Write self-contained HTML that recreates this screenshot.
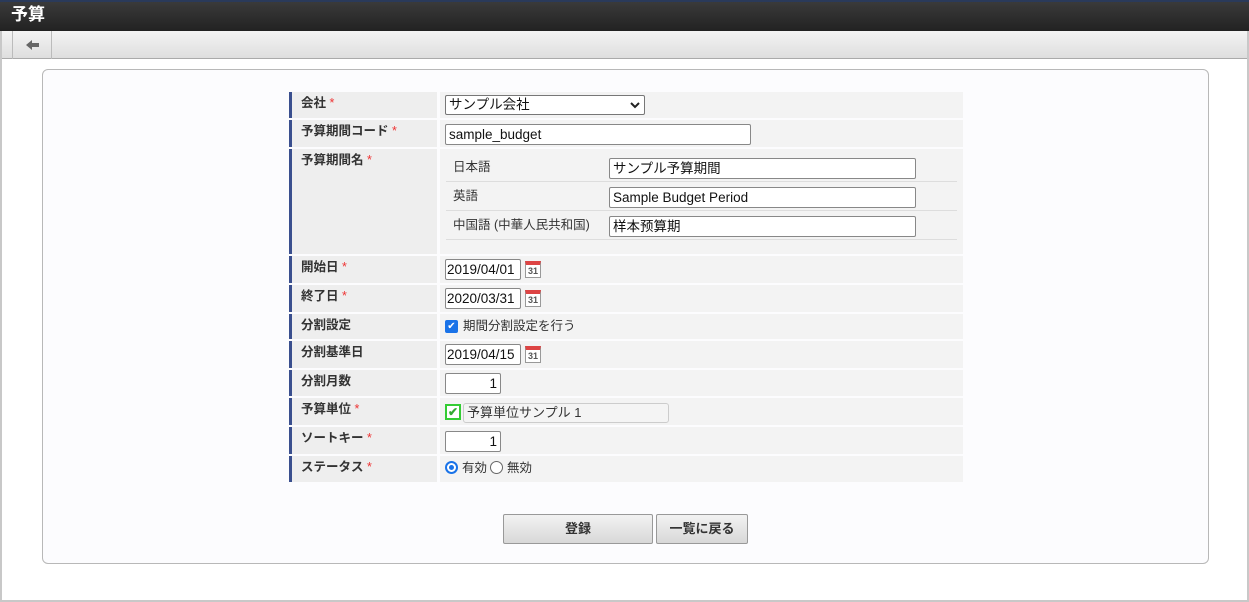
<!DOCTYPE html>
<html><head><meta charset="utf-8"><style>
*{box-sizing:border-box;margin:0;padding:0}
body{width:1249px;height:602px;overflow:hidden;background:#fff;font-family:"Liberation Sans","Noto Sans CJK JP",sans-serif;font-size:13px;color:#333;position:relative}
.frame{position:absolute;left:0;top:0;width:1249px;height:602px;border:2px solid #c8c8c8;border-top:none}
.hdr{position:absolute;left:0;top:0;width:1249px;height:31px;background:linear-gradient(#3a3a3a,#222);border-top:2px solid #2a3a5a;color:#fff;font-weight:bold;font-size:17px;line-height:20px;padding:3px 0 0 11px}
.tb{position:absolute;left:2px;top:31px;width:1245px;height:28px;background:linear-gradient(#f4f4f4,#dedede);border-bottom:1px solid #aaa}
.tb .b{position:absolute;left:10px;top:0;width:40px;height:28px;border-left:1px solid #bbb;border-right:1px solid #bbb}
.panel{position:absolute;left:42px;top:69px;width:1167px;height:495px;border:1px solid #b8b8b8;border-radius:6px;background:#fcfcfe}
.lab{position:absolute;left:289px;width:148px;background:#eee;border-left:3px solid #3a4f8e;font-weight:bold;font-size:12.5px;line-height:16px;padding:3px 0 0 9px;color:#333}
.val{position:absolute;left:440px;width:523px;background:#f3f3f3}
.r{color:#e33;font-weight:normal}
.in{position:absolute;background:#fff;border:1px solid #888;border-radius:2px;height:21px;font-size:13.5px;line-height:17px;padding:1px 3px;color:#111;white-space:nowrap}
.cal{position:absolute;width:16px;height:17px;border:1px solid #999;border-top:4px solid #d44;background:#fff;font-size:9px;text-align:center;line-height:12px;color:#555;font-weight:bold}
.sub{position:absolute;left:453px;font-size:12.5px;line-height:16px;color:#333}
.btn{position:absolute;top:514px;height:30px;border:1px solid #999;border-radius:2px;background:linear-gradient(#f2f2f2,#d8d8d8);text-align:center;line-height:28px;font-weight:bold;font-size:13px;color:#333}
</style></head><body>
<div class="frame"></div>
<div class="hdr">予算</div>
<div class="tb"><div class="b"><svg width="40" height="28" viewBox="0 0 40 28"><path d="M13 14 L19 9 L19 12 L26 12 L26 16 L19 16 L19 19 Z" fill="#666"/></svg></div></div>
<div class="panel"></div>

<div class="lab" style="top:92px;height:26px">会社 <span class="r">*</span></div><div class="val" style="top:92px;height:26px"></div>
<div class="in" style="left:445px;top:95px;width:200px;height:20px;padding:0 3px;border-color:#777">サンプル会社<svg style="position:absolute;right:4px;top:5px" width="10" height="8" viewBox="0 0 10 8"><path d="M1 2 L5 6 L9 2" stroke="#222" stroke-width="2" fill="none"/></svg></div>
<div class="lab" style="top:120px;height:27px">予算期間コード <span class="r">*</span></div><div class="val" style="top:120px;height:27px"></div>
<div class="in" style="left:445px;top:124px;width:306px">sample_budget</div>
<div class="lab" style="top:149px;height:105px">予算期間名 <span class="r">*</span></div><div class="val" style="top:149px;height:105px"></div>
<div style="position:absolute;left:446px;top:181px;width:511px;border-top:1px solid #ddd"></div>
<div style="position:absolute;left:446px;top:210px;width:511px;border-top:1px solid #ddd"></div>
<div style="position:absolute;left:446px;top:239px;width:511px;border-top:1px solid #ddd"></div>
<div class="sub" style="top:159px">日本語</div><div class="in" style="left:609px;top:158px;width:307px">サンプル予算期間</div>
<div class="sub" style="top:188px">英語</div><div class="in" style="left:609px;top:187px;width:307px">Sample Budget Period</div>
<div class="sub" style="top:217px">中国語 (中華人民共和国)</div><div class="in" style="left:609px;top:216px;width:307px">样本预算期</div>

<div class="lab" style="top:256px;height:27px">開始日 <span class="r">*</span></div><div class="val" style="top:256px;height:27px"></div>
<div class="in" style="left:445px;top:259px;width:76px;padding:1px 1px">2019/04/01</div><div class="cal" style="left:525px;top:261px">31</div>
<div class="lab" style="top:285px;height:27px">終了日 <span class="r">*</span></div><div class="val" style="top:285px;height:27px"></div>
<div class="in" style="left:445px;top:288px;width:76px;padding:1px 1px">2020/03/31</div><div class="cal" style="left:525px;top:290px">31</div>
<div class="lab" style="top:314px;height:25px">分割設定</div><div class="val" style="top:314px;height:25px"></div>
<div style="position:absolute;left:445px;top:320px;width:13px;height:13px;background:#1a73e8;border-radius:2px;color:#fff;font-size:10px;line-height:13px;text-align:center">✔</div>
<div style="position:absolute;left:463px;top:318px;font-size:12.5px;line-height:16px">期間分割設定を行う</div>
<div class="lab" style="top:341px;height:27px">分割基準日</div><div class="val" style="top:341px;height:27px"></div>
<div class="in" style="left:445px;top:344px;width:76px;padding:1px 1px">2019/04/15</div><div class="cal" style="left:525px;top:346px">31</div>
<div class="lab" style="top:370px;height:26px">分割月数</div><div class="val" style="top:370px;height:26px"></div>
<div class="in" style="left:445px;top:373px;width:56px;text-align:right">1</div>
<div class="lab" style="top:398px;height:27px">予算単位 <span class="r">*</span></div><div class="val" style="top:398px;height:27px"></div>
<div style="position:absolute;left:445px;top:404px;width:16px;height:16px;border:2px solid #3c3;background:#fff;color:#3a3;font-size:12px;line-height:12px;text-align:center;font-weight:bold">✔</div>
<div style="position:absolute;left:463px;top:403px;width:206px;height:20px;border:1px solid #ccc;border-radius:3px;background:#f4f4f4;padding:0 3px;font-size:13px;line-height:18px">予算単位サンプル 1</div>
<div class="lab" style="top:427px;height:27px">ソートキー <span class="r">*</span></div><div class="val" style="top:427px;height:27px"></div>
<div class="in" style="left:445px;top:431px;width:56px;text-align:right">1</div>
<div class="lab" style="top:456px;height:26px">ステータス <span class="r">*</span></div><div class="val" style="top:456px;height:26px"></div>
<div style="position:absolute;left:445px;top:461px;width:13px;height:13px;border-radius:50%;border:2px solid #1a73e8;background:#fff"><div style="margin:2px;width:5px;height:5px;border-radius:50%;background:#1a73e8"></div></div>
<div style="position:absolute;left:462px;top:460px;font-size:12.5px;line-height:16px">有効</div>
<div style="position:absolute;left:490px;top:461px;width:13px;height:13px;border-radius:50%;border:1px solid #666;background:#fff"></div>
<div style="position:absolute;left:507px;top:460px;font-size:12.5px;line-height:16px">無効</div>

<div class="btn" style="left:503px;width:150px">登録</div>
<div class="btn" style="left:656px;width:92px">一覧に戻る</div>
</body></html>
